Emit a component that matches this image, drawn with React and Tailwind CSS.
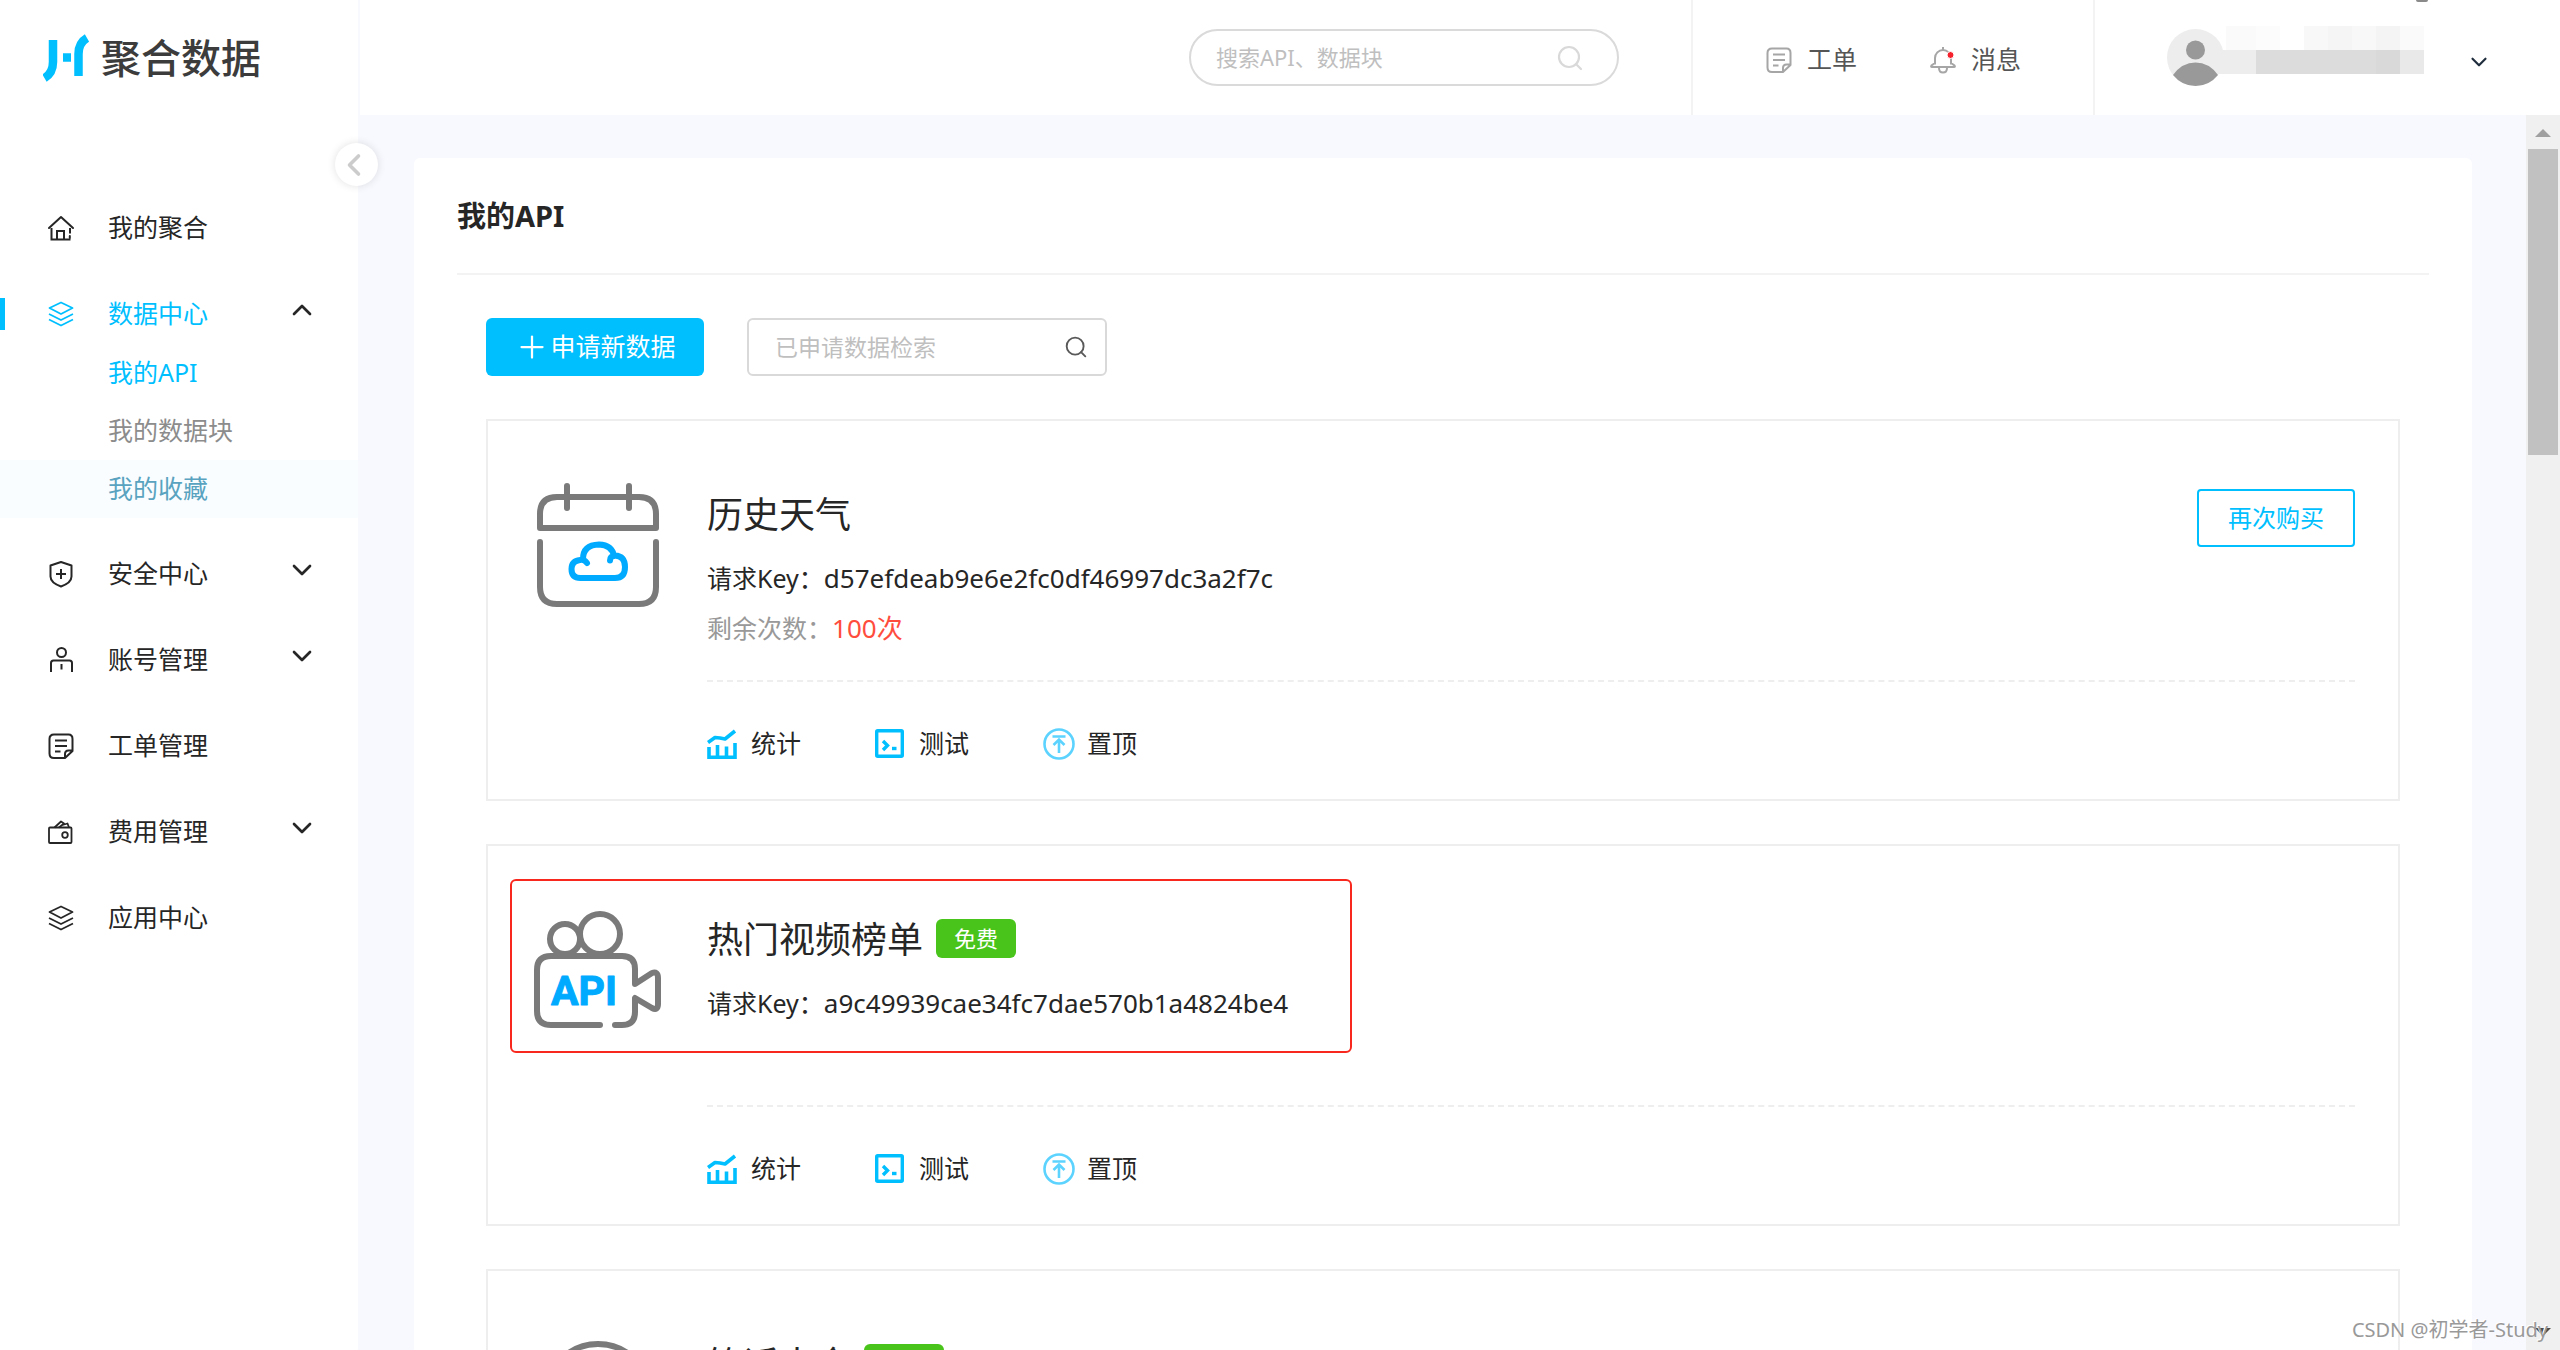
import React, { useState } from 'react';
import { ChevronDown, ChevronLeft, ChevronUp, Plus } from 'lucide-react';

const HomeIcon = () => (
  <svg width="28" height="28" viewBox="0 0 28 28" fill="none" stroke="currentColor" strokeWidth="2">
    <path d="M2 14 14 3l12 11" strokeLinejoin="round" strokeLinecap="round" />
    <path d="M4.5 14v11.5h19M10 25.500v-8.500h7v8.500M23 14v5.500" />
    <path d="M22.800 22v2" strokeLinecap="round" />
  </svg>
);

const LayersIcon = () => (
  <svg width="28" height="28" viewBox="0 0 28 28" fill="none" stroke="currentColor" strokeWidth="1.800" strokeLinejoin="round">
    <path d="M14 2.500 25.500 8 14 14 2.500 8Z" />
    <path d="M2 14l12 6 12-6M2 19.500l12 6 12-6" />
  </svg>
);

const ShieldIcon = () => (
  <svg width="28" height="28" viewBox="0 0 28 28" fill="none" stroke="currentColor" strokeWidth="2" strokeLinejoin="round">
    <path d="M14 2 24.500 5.500v11c0 4.500-5 8-10.500 10C8.500 24.500 3.500 21 3.500 16.500v-11Z" />
    <path d="M14 9v10M9 14h10" />
  </svg>
);

const AccountIcon = () => (
  <svg width="28" height="28" viewBox="0 0 28 28" fill="none" stroke="currentColor" strokeWidth="2">
    <circle cx="14.500" cy="6.500" r="4.500" />
    <path d="M4 26V17q0-2.500 2.500-2.500h16Q25 14.500 25 17v9M14.500 18v5.500" />
  </svg>
);

const TicketIcon = () => (
  <svg width="28" height="28" viewBox="0 0 28 28" fill="none" stroke="currentColor" strokeWidth="2" strokeLinejoin="round">
    <path d="M18 26H7q-4.500 0-4.500-4.500V7Q2.500 2.500 7 2.500h14.500Q25.500 2.500 25.500 7v12L18 26v-4q0-3.500 3.500-3.500h4" />
    <path d="M8 8.500h12M8 14h12M8 19.500h5.500" />
  </svg>
);

const WalletIcon = () => (
  <svg width="28" height="28" viewBox="0 0 28 28" fill="none" stroke="currentColor" strokeWidth="1.800" strokeLinejoin="round">
    <rect x="2" y="9.500" width="22.500" height="15.500" rx="1" />
    <circle cx="18" cy="17" r="2.800" />
    <path d="M7.500 9.500 14 3.500l3 2-5 4M15.500 7l5-1.500 1.500 4" />
  </svg>
);

const BellIcon = () => (
  <svg width="28" height="28" viewBox="0 0 28 28" fill="none" stroke="currentColor" strokeWidth="2">
    <path d="M14 1v3M6 18.500v-6.500a8 8 0 0 1 16 0v6.500M6 17l-3.500 2.500q-1 1.500.5 1.500h22q1.500 0 .5-1.500L22 17" />
    <path d="M10 22q0 4.500 4 4.500t4-4.500" />
    <circle cx="21.500" cy="9" r="3.500" fill="#f5222d" stroke="#fff" strokeWidth="1" />
  </svg>
);

const SearchIcon = ({ className }) => (
  <svg className={className} viewBox="0 0 26 26" fill="none" stroke="currentColor" strokeWidth="2.200">
    <circle cx="12" cy="12" r="10" />
    <path d="m19 19 5 5" strokeLinecap="round" />
  </svg>
);

const StatsIcon = () => (
  <svg width="30" height="30" viewBox="0 0 30 30" fill="none" stroke="#00bfff" strokeWidth="3.600">
    <path d="M1 13.500 8 8.500l5 .5 5 1L28 2" strokeLinejoin="round" />
    <path d="M2 18v10.200h26V14" />
    <path d="M10.500 16v12M19.500 17.500V28" />
  </svg>
);

const TestIcon = () => (
  <svg width="29" height="29" viewBox="0 0 29 29" fill="none" stroke="#00bfff" strokeWidth="3.400">
    <rect x="1.700" y="1.700" width="25.600" height="25.600" rx="1" />
    <path d="m8 12 4.500 4.500L8 21" />
    <path d="M17 19.500h4.500" />
  </svg>
);

const TopIcon = () => (
  <svg width="32" height="32" viewBox="0 0 32 32" fill="none" stroke="#5cd3ff" strokeWidth="2.600">
    <circle cx="16" cy="16" r="14.500" />
    <path d="M9.500 8.500h13M16 25V11.500M10.500 17l5.500-5.500 5.500 5.500" />
  </svg>
);

const WeatherLogo = () => (
  <svg width="122" height="124" viewBox="0 0 122 124" fill="none" stroke="#7a7a7a" strokeWidth="6" strokeLinecap="round">
    <path d="M3 45V31Q3 14 20 14h82q17 0 17 17v14Z" strokeLinejoin="round" />
    <path d="M30 3v22M92 3v22" />
    <path d="M3 59v45q0 17 17 17h82q17 0 17-17V59" />
    <path
      d="M50 80q-3-4-7-3-8.500 1-8.500 9 0 9 9 9H78q10 0 10-11t-10-11.500q-5 .5-5 5M46 76q0-14 16-14.500Q75 62 77 73"
      stroke="#0af"
      strokeLinejoin="round"
    />
  </svg>
);

const VideoLogo = () => (
  <svg width="128" height="118" viewBox="0 0 128 118" fill="none" stroke="#7a7a7a" strokeWidth="6" strokeLinecap="round" strokeLinejoin="round">
    <circle cx="31" cy="28" r="15" />
    <circle cx="66" cy="23" r="20" />
    <path d="M66 114H17q-14 0-14-14V59q0-14 14-14h71q13 0 13 13v15l17-11q6-2 6 5v26q0 7-6 4l-17-10v14q0 13-13 13H81" />
    <text x="50" y="94" textAnchor="middle" fill="#0af" stroke="#0af" strokeWidth="1" fontSize="41" fontWeight="700" fontFamily="Roboto, sans-serif">
      API
    </text>
  </svg>
);

const JokeLogo = () => (
  <svg width="124" height="118" viewBox="0 0 124 118" fill="none" stroke="#7a7a7a" strokeWidth="6" strokeLinecap="round">
    <circle cx="62" cy="60" r="52" />
    <path d="M36 68q26 34 52 0" stroke="#0af" />
  </svg>
);

const menu = [
  { label: '我的聚合', icon: HomeIcon },
  {
    label: '数据中心',
    icon: LayersIcon,
    active: true,
    children: [
      { label: '我的API', className: 'text-[#00bfff]' },
      { label: '我的数据块', className: 'text-[#8c8c8c]' },
      { label: '我的收藏', className: 'bg-[#f9fdff] text-[#59a3c0]' },
    ],
  },
  { label: '安全中心', icon: ShieldIcon, collapsed: true },
  { label: '账号管理', icon: AccountIcon, collapsed: true },
  { label: '工单管理', icon: TicketIcon },
  { label: '费用管理', icon: WalletIcon, collapsed: true },
  { label: '应用中心', icon: LayersIcon },
];

const apis = [
  { name: '历史天气', key: 'd57efdeab9e6e2fc0df46997dc3a2f7c', remaining: '100次', logo: WeatherLogo },
  { name: '热门视频榜单', key: 'a9c49939cae34fc7dae570b1a4824be4', free: true, marked: true, logo: VideoLogo },
  { name: '笑话大全', free: true, logo: JokeLogo },
];

const actions = [
  { label: '统计', icon: StatsIcon },
  { label: '测试', icon: TestIcon },
  { label: '置顶', icon: TopIcon },
];

function Sidebar() {
  return (
    <aside className="relative w-[360px] shrink-0 border-r-2 border-[#f8f9fe] bg-white">
      <a href="#home" className="flex h-[115px] items-center gap-3 pl-[43px]">
        <svg width="46" height="48" viewBox="0 0 46 48" fill="none" stroke="#00bfff" strokeWidth="8.500">
          <path d="M10 6v22q0 11-8.500 16" />
          <path d="M35.500 42V20q0-11 8.500-16" />
          <path d="M20 23.500h8" />
        </svg>
        <span className="text-[40px] leading-[48px] font-medium text-[#3c3c3c]">聚合数据</span>
      </a>

      <button
        aria-label="收起菜单"
        className="absolute top-[143px] -right-5 z-10 flex size-[43px] items-center justify-center rounded-full bg-white pr-1.5 text-[#ccc] shadow-[0_0_8px_rgba(0,0,0,0.12)]"
      >
        <ChevronLeft size={36} strokeWidth={2.4} />
      </button>

      <nav className="mt-[83px]">
        <ul className="flex flex-col gap-[26px] text-[25px]">
          {menu.map((item) => {
            const Icon = item.icon;
            return (
              <li key={item.label}>
                <a
                  href="#menu"
                  className={`relative flex h-[60px] items-center pr-10 pl-[47px] ${item.active ? 'text-[#00bfff]' : 'text-[#262626]'}`}
                >
                  {item.active && <span className="absolute left-0 h-8 w-[5px] bg-[#00bfff]" />}
                  <Icon />
                  <span className="ml-[33px] flex-1">{item.label}</span>
                  {item.active && <ChevronUp size={32} strokeWidth={2} className="mb-2 text-[#262626]" />}
                  {item.collapsed && <ChevronDown size={32} strokeWidth={2} className="mb-2" />}
                </a>
                {item.children && (
                  <ul>
                    {item.children.map((child) => (
                      <li key={child.label}>
                        <a href="#sub" className={`flex h-[58px] items-center pl-[108px] ${child.className}`}>
                          {child.label}
                        </a>
                      </li>
                    ))}
                  </ul>
                )}
              </li>
            );
          })}
        </ul>
      </nav>
    </aside>
  );
}

function Header() {
  return (
    <header className="flex h-[115px] shrink-0 justify-end bg-white text-[25px] text-[#555]">
      <div className="flex items-center border-r-2 border-[#f3f3f3] pr-[72px]">
        <label className="flex h-[57px] w-[430px] items-center rounded-full border-2 border-[#dadada] pr-[34px] pl-[25px]">
          <input
            type="search"
            aria-label="搜索API、数据块"
            placeholder="搜索API、数据块"
            className="min-w-0 flex-1 text-[22px] outline-none placeholder:text-[#bfbfbf]"
          />
          <SearchIcon className="size-[26px] text-[#d9d9d9]" />
        </label>
      </div>
      <div className="flex items-center gap-[72px] border-r-2 border-[#f3f3f3] px-[72px] pt-1">
        <a href="#tickets" className="flex items-center gap-3.5">
          <span className="text-[#a6a6a6]"><TicketIcon /></span>工单
        </a>
        <a href="#messages" className="flex items-center gap-3.5">
          <span className="text-[#a6a6a6]"><BellIcon /></span>消息
        </a>
      </div>
      <div className="relative flex w-[465px] items-center pl-[72px]">
        <svg width="57" height="57" viewBox="0 0 57 57">
          <circle cx="28.500" cy="28.500" r="28.500" fill="#ededed" />
          <circle cx="28.500" cy="21" r="9.500" fill="#999" />
          <path d="M6 46q9-12.500 22.500-12.500T51 46q-9 11-22.500 11T6 46Z" fill="#999" />
        </svg>
        {/* obscured user name */}
        <div className="-ml-1.5 mb-4 h-12 w-[206px]">
          <div className="flex h-6">
            <span className="ml-2 w-[30px] bg-[#fafafa]" />
            <span className="w-6 bg-[#fcfcfc]" />
            <span className="w-6 bg-white" />
            <span className="w-6 bg-[#f8f8f8]" />
            <span className="w-6 bg-[#f5f5f5]" />
            <span className="w-6 bg-[#f8f8f8]" />
            <span className="w-6 bg-[#f4f4f4]" />
            <span className="w-6 bg-[#fafafa]" />
          </div>
          <div className="flex h-6">
            <span className="w-[38px] bg-[#ededed]" />
            <span className="w-[120px] bg-[#dcdcdc]" />
            <span className="w-6 bg-[#d9d9d9]" />
            <span className="w-6 bg-[#e9e9e9]" />
          </div>
        </div>
        <button aria-label="用户菜单" className="mt-2 ml-[42px] text-[#1f2d3d]">
          <ChevronDown size={26} strokeWidth={2} />
        </button>
        <span className="absolute top-0 right-[132px] h-0.5 w-3 rounded-b bg-[#8a8a8a]" />
      </div>
    </header>
  );
}

function ApiCard({ api }) {
  const Logo = api.logo;
  return (
    <article className="relative flex gap-[45px] border-2 border-[#eee] pt-[62px] pr-[43px] pl-[46px]">
      {api.marked && <span className="absolute top-[33px] left-[22px] h-[174px] w-[842px] rounded-md border-2 border-[#f8281e]" />}
      <div className="flex h-[124px] w-32 shrink-0 items-center justify-center">
        <Logo />
      </div>
      <div className="flex-1">
        <div className="flex h-[199px] items-start justify-between border-b-2 border-dashed border-[#eee]">
          <div className="text-[25px] leading-[50px] text-[#262626]">
            <div className="mb-1.5 flex h-16 items-center gap-[13px]">
              <h2 className="text-[36px]">{api.name}</h2>
              {api.free && (
                <span className="mb-1 flex h-[39px] items-center rounded-md bg-[#49c41a] px-[18px] text-[22px] text-white">免费</span>
              )}
            </div>
            {api.key && (
              <p>
                请求Key：<span className="text-[26px]">{api.key}</span>
              </p>
            )}
            {api.remaining && (
              <p className="text-[#999]">
                剩余次数：<span className="text-[26px] text-[#ff4d3d]">{api.remaining}</span>
              </p>
            )}
          </div>
          {api.remaining && (
            <button className="mt-1.5 h-[58px] w-[158px] rounded border-2 border-[#00bfff] text-[24px] text-[#00bfff]">再次购买</button>
          )}
        </div>
        <div className="flex h-[117px] items-center gap-[74px] pt-1.5 text-[25px] text-[#262626]">
          {actions.map(({ label, icon: Icon }) => (
            <a key={label} href="#action" className="flex items-center gap-3">
              <span className="w-8"><Icon /></span>
              {label}
            </a>
          ))}
        </div>
      </div>
    </article>
  );
}

function App() {
  const [keyword, setKeyword] = useState('');

  return (
    <div className="relative flex h-screen overflow-hidden bg-[#f8f9ff] font-['Noto_Sans','Noto_Sans_CJK_SC',sans-serif]">
      <Sidebar />
      <div className="flex min-w-0 flex-1 flex-col">
        <Header />
        <div className="flex min-h-0 flex-1">
          <main className="min-w-0 flex-1 overflow-hidden pt-[43px] pr-[54px] pl-[54px]">
            <section className="rounded-md bg-white px-[43px] pb-10">
              <h1 className="flex h-[117px] items-center border-b-2 border-[#f3f3f3] text-[29px] font-bold text-[#262626]">我的API</h1>
              <div className="px-[29px]">
                <div className="mt-[43px] mb-[43px] flex gap-[43px]">
                  <button className="flex h-[58px] w-[218px] items-center justify-center rounded-md bg-[#00bfff] text-[25px] text-white">
                    <Plus size={36} strokeWidth={1.5} />
                    申请新数据
                  </button>
                  <label className="flex h-[58px] w-[360px] items-center rounded-md border-2 border-[#d9d9d9] pr-[18px] pl-[26px]">
                    <input
                      type="text"
                      aria-label="已申请数据检索"
                      placeholder="已申请数据检索"
                      value={keyword}
                      onChange={(e) => setKeyword(e.target.value)}
                      className="min-w-0 flex-1 text-[23px] outline-none placeholder:text-[#bfbfbf]"
                    />
                    <SearchIcon className="size-[22px] text-[#595959]" />
                  </label>
                </div>
                <div className="flex flex-col gap-[43px]">
                  {apis.map((api) => (
                    <ApiCard key={api.name} api={api} />
                  ))}
                </div>
              </div>
            </section>
          </main>
          <div className="flex w-[34px] shrink-0 flex-col items-center justify-between bg-[#f0f0f0]">
            <div className="flex flex-col items-center">
              <svg width="34" height="34" viewBox="0 0 34 34">
                <path d="M17 14l8 8H9Z" fill="#a0a0a0" />
              </svg>
              <div className="h-[306px] w-[30px] bg-[#c1c1c1]" />
            </div>
            <svg width="34" height="34" viewBox="0 0 34 34">
              <path d="M17 20l8-8H9Z" fill="#4a4a4a" />
            </svg>
          </div>
        </div>
      </div>
      <span className="absolute right-3 bottom-1.5 text-[20px] leading-[28px] text-[#999] [text-shadow:-1px_-1px_0_#fff]">CSDN @初学者-Study</span>
    </div>
  );
}

export default App;
